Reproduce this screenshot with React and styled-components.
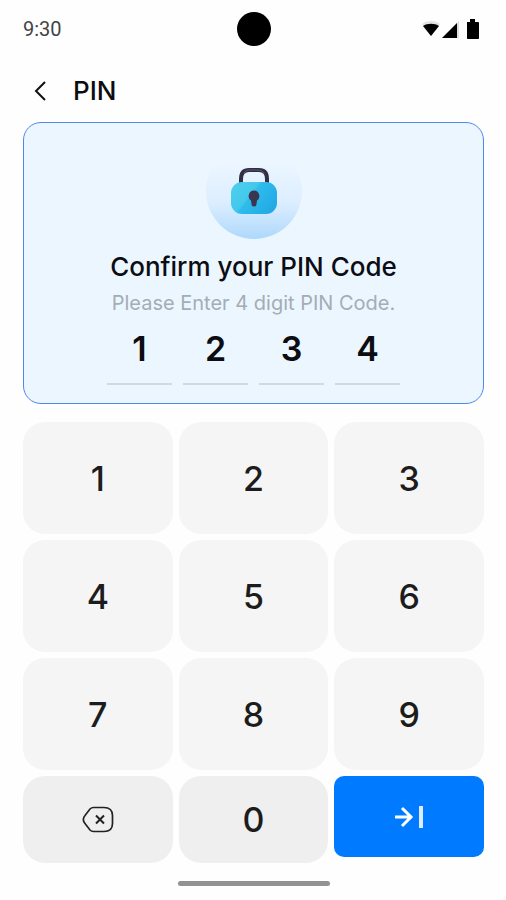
import React from 'react'
import styled, { createGlobalStyle } from 'styled-components'

const GlobalStyle = createGlobalStyle`
* {
box-sizing: border-box;
}
body {
margin: 0;
background: #fefefe;
color: #0b0d12;
font-family: Inter, Roboto, sans-serif;
}
button, input {
font-family: inherit;
color: inherit;
border: none;
padding: 0;
}
`
const MainContainer = styled.div`
display: flex;
flex-direction: column;
min-height: 100vh;
padding: 0 22px 0 23px;
`
const StatusBar = styled.div`
display: grid;
grid-template-columns: 1fr 34px 1fr;
align-items: center;
height: 57px;
`
const Clock = styled.time`
font-family: Roboto, sans-serif;
font-size: 20px;
line-height: 24px;
color: #444444;
`
const Camera = styled.div`
width: 34px;
height: 34px;
border-radius: 50%;
background: #000000;
`
const StatusIcons = styled.svg`
justify-self: end;
margin-right: 4px;
`
const Header = styled.header`
display: flex;
align-items: center;
gap: 16px;
height: 65px;
padding-top: 2px;
`
const BackButton = styled.button`
display: flex;
align-items: center;
justify-content: center;
width: 34px;
height: 34px;
background: none;
`
const PageTitle = styled.h1`
margin: 0;
font-size: 26px;
font-weight: 500;
line-height: 32px;
`
const Card = styled.section`
display: flex;
flex-direction: column;
align-items: center;
padding: 20px 16px 18px;
border: 1px solid #4f87ea;
border-radius: 18px;
background: #ecf6ff;
`
const IconCircle = styled.div`
display: flex;
align-items: center;
justify-content: center;
width: 96px;
height: 96px;
border-radius: 50%;
background: linear-gradient(#ecf6ff 20%, #dceeff 62%, #aed8fb 100%);
`
const CardTitle = styled.h2`
margin: 12px 0 0;
font-size: 26px;
font-weight: 500;
line-height: 32px;
`
const CardText = styled.p`
margin: 4px 0 0;
font-size: 20px;
line-height: 32px;
color: #a3adb5;
`
const PinRow = styled.div`
display: flex;
gap: 11px;
margin-top: 2px;
`
const PinInput = styled.input`
width: 65px;
height: 64px;
padding-bottom: 8px;
border-bottom: 2px solid #d0dae0;
border-radius: 0;
background: none;
font-size: 34px;
font-weight: 600;
text-align: center;
outline: none;
`
const Keypad = styled.div`
display: grid;
grid-template-columns: repeat(3, 1fr);
grid-template-rows: repeat(3, 112px) 87px;
gap: 6px;
margin-top: 18px;
`
const Key = styled.button`
display: flex;
align-items: center;
justify-content: center;
border-radius: 22px;
background: ${(props) => (props.$dark ? '#efefef' : '#f5f5f5')};
color: #1c1c1c;
font-size: 34px;
font-weight: 500;
`
const EnterKey = styled(Key)`
height: 81px;
border-radius: 10px;
background: #007aff;
color: #ffffff;
`
const HomeIndicator = styled.div`
align-self: center;
width: 152px;
height: 5px;
margin: 18px 0 14px;
border-radius: 3px;
background: #929292;
`

const LockIcon = () => (
  <svg width="48" height="48" viewBox="0 0 48 48" fill="none" aria-hidden="true">
    <defs>
      <linearGradient id="lockBody" x1="4" y1="16" x2="42" y2="46" gradientUnits="userSpaceOnUse">
        <stop stopColor="#4dcfec" />
        <stop offset="0.4" stopColor="#43c8ec" />
        <stop offset="0.45" stopColor="#2fbcec" />
        <stop offset="1" stopColor="#22a8e4" />
      </linearGradient>
    </defs>
    <path d="M11 18v-6c0-6 3-9 8-9h10c5 0 8 3 8 9v6" stroke="#302f46" strokeWidth="4" />
    <path d="M14 6c1-2 3-3 6-3h8c3 0 5 1 6 3" stroke="#5b5a70" strokeWidth="1" strokeLinecap="round" />
    <rect x="1" y="15" width="46" height="32" rx="11" fill="url(#lockBody)" />
    <path d="M24 23.500a5.500 5.500 0 0 0-3 10l.5 3.500a2.500 2.500 0 0 0 5 0l.5-3.500a5.500 5.500 0 0 0-3-10z" fill="#3a3650" />
  </svg>
)

const BackspaceIcon = () => (
  <svg width="32" height="27" viewBox="0 0 32 27" fill="none" stroke="#222222" strokeWidth="2" aria-hidden="true">
    <path d="M11.500 1.500H22c5.500 0 8.500 3 8.500 8v8c0 5-3 8-8.500 8H11.500c-1.500 0-2.500-.5-3.500-1.500L3 17.500C.9 15 .9 12 3 9.500L8 3C9 2 10 1.500 11.500 1.500z" strokeWidth="1.700" />
    <path d="M14 9.500l8 8M22 9.500l-8 8" />
  </svg>
)

const EnterIcon = () => (
  <svg width="30" height="24" viewBox="0 0 30 24" fill="none" stroke="currentColor" aria-hidden="true">
    <path d="M1 12h17M8 3l9 9-9 9" strokeWidth="3" />
    <path d="M27 1v22" stroke="#dcebff" strokeWidth="4" />
  </svg>
)

const digits = ['1', '2', '3', '4', '5', '6', '7', '8', '9']

class App extends React.Component {
  state = {
    pin: '1234',
  }

  addDigit = (digit) => {
    if (this.state.pin.length < 4) {
      this.setState({ pin: this.state.pin + digit })
    }
  }

  removeDigit = () => {
    this.setState({ pin: this.state.pin.slice(0, -1) })
  }

  render() {
    return (
      <MainContainer>
        <GlobalStyle />
        <StatusBar>
          <Clock>9:30</Clock>
          <Camera />
          <StatusIcons width="58" height="22" viewBox="0 0 58 22" aria-hidden="true">
            <path d="M0 6c5-4 13-4 18 0l-9 12z" fill="#e4e4e4" />
            <path d="M1 8c4-3 12-3 16 0l-8 10z" fill="#000000" />
            <path d="M20 20L37 3v17z" fill="#dddddd" />
            <path d="M20 20L35 5v15z" fill="#000000" />
            <path d="M45 4h3V1h5v3h3c.6 0 1 .4 1 1v15c0 .6-.4 1-1 1H46c-.6 0-1-.4-1-1V5c0-.6 0-1 0-1z" fill="#000000" />
          </StatusIcons>
        </StatusBar>
        <Header>
          <BackButton type="button" aria-label="Back">
            <svg width="12" height="20" viewBox="0 0 12 20" fill="none" stroke="#111111" strokeWidth="2" aria-hidden="true">
              <path d="M11 1L2 10l9 9" />
            </svg>
          </BackButton>
          <PageTitle>PIN</PageTitle>
        </Header>
        <Card>
          <IconCircle>
            <LockIcon />
          </IconCircle>
          <CardTitle>Confirm your PIN Code</CardTitle>
          <CardText>Please Enter 4 digit PIN Code.</CardText>
          <PinRow>
            {[0, 1, 2, 3].map((index) => (
              <PinInput
                key={index}
                type="text"
                inputMode="numeric"
                aria-label={`PIN digit ${index + 1}`}
                value={this.state.pin[index] || ''}
                readOnly
              />
            ))}
          </PinRow>
        </Card>
        <Keypad>
          {digits.map((digit) => (
            <Key key={digit} type="button" onClick={() => this.addDigit(digit)}>
              {digit}
            </Key>
          ))}
          <Key type="button" $dark aria-label="Delete" onClick={this.removeDigit}>
            <BackspaceIcon />
          </Key>
          <Key type="button" $dark onClick={() => this.addDigit('0')}>
            0
          </Key>
          <EnterKey type="button" aria-label="Confirm">
            <EnterIcon />
          </EnterKey>
        </Keypad>
        <HomeIndicator />
      </MainContainer>
    )
  }
}

export default App
